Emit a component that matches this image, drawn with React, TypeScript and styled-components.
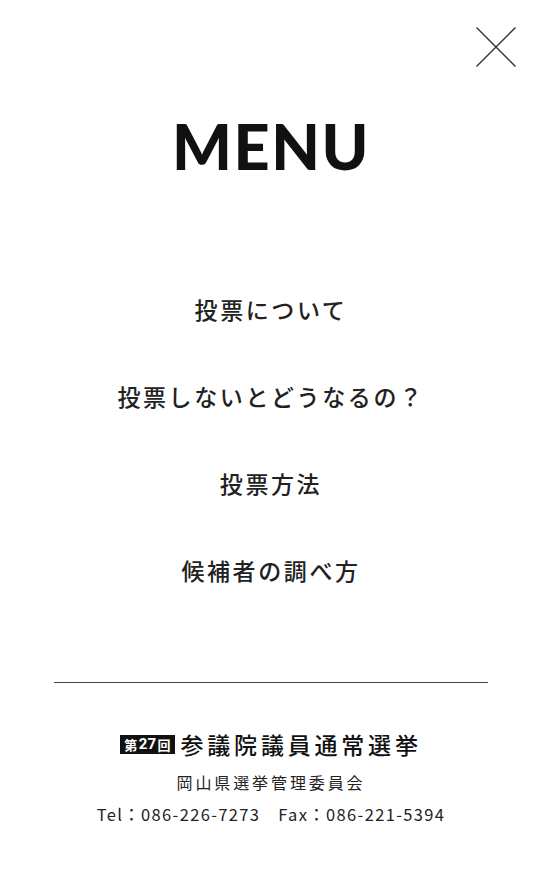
import React from "react";
import styled, { createGlobalStyle } from "styled-components";

const JP = `"Noto Sans CJK JP", "Noto Sans", sans-serif`;

const MENU_ITEMS = ["投票について", "投票しないとどうなるの？", "投票方法", "候補者の調べ方"];

const GlobalStyle = createGlobalStyle`
  html, body {
    margin: 0;
    padding: 0;
    background: #fff;
  }
  body {
    font-family: ${JP};
    color: #222;
  }
`;

const Page = styled.div`
  width: 542px;
  min-height: 878px;
  display: flex;
  flex-direction: column;
  align-items: center;
  background: #fff;
`;

const TopBar = styled.div`
  align-self: stretch;
  display: flex;
  justify-content: flex-end;
  padding: 27px 26px 0 0;
`;

const CloseButton = styled.button`
  width: 40px;
  height: 40px;
  padding: 0;
  border: none;
  background: none;
  cursor: pointer;
  display: block;
`;

const Title = styled.h1`
  margin: 39px 0 0;
  font-family: "Lato", "DejaVu Sans", sans-serif;
  font-weight: 900;
  font-size: 63px;
  line-height: 80px;
  letter-spacing: 1.5px;
  color: #111;
`;

const Nav = styled.ul`
  list-style: none;
  margin: 106px 0 0;
  padding: 0;
  display: flex;
  flex-direction: column;
  align-items: center;
  gap: 53px;
`;

const NavItem = styled.li`
  font-family: ${JP};
  font-weight: 500;
  font-size: 23px;
  line-height: 34px;
  letter-spacing: 2.6px;
  color: #222;
`;

const Divider = styled.hr`
  width: 80%;
  margin: 95px 0 0;
  border: none;
  border-top: 1px solid #444;
`;

const Footer = styled.footer`
  margin-top: 46px;
  display: flex;
  flex-direction: column;
  align-items: center;
`;

const ElectionRow = styled.div`
  display: flex;
  align-items: center;
  gap: 6px;
`;

const Badge = styled.span`
  display: inline-flex;
  align-items: center;
  height: 19px;
  padding: 0 4px;
  background: #111;
  color: #fff;
  font-family: ${JP};
  font-weight: 700;
  font-size: 13px;
  letter-spacing: 0;
`;

const BadgeNum = styled.span`
  font-family: "Roboto", "Liberation Sans", sans-serif;
  font-weight: 700;
  font-size: 15px;
  margin: 0 1.5px;
`;

const ElectionName = styled.span`
  font-family: ${JP};
  font-weight: 500;
  font-size: 23px;
  line-height: 30px;
  letter-spacing: 3.8px;
  color: #111;
`;

const Org = styled.div`
  margin-top: 11px;
  font-family: ${JP};
  font-size: 16px;
  line-height: 24px;
  letter-spacing: 2.9px;
  color: #222;
`;

const Contact = styled.div`
  margin-top: 8px;
  font-family: ${JP};
  font-size: 16.5px;
  line-height: 24px;
  letter-spacing: 1.35px;
  color: #222;
  white-space: pre;
`;

const CloseIcon: React.FC = () => (
  <svg width="40" height="40" viewBox="0 0 40 40" aria-hidden>
    <path d="M0.5 0.5L39.5 39.5M39.5 0.5L0.5 39.5" stroke="#333" strokeWidth="1.4" fill="none" />
  </svg>
);

const App: React.FC = () => (
  <Page>
    <GlobalStyle />
    <TopBar>
      <CloseButton type="button" aria-label="close">
        <CloseIcon />
      </CloseButton>
    </TopBar>
    <Title>MENU</Title>
    <Nav>
      {MENU_ITEMS.map((item) => (
        <NavItem key={item}>{item}</NavItem>
      ))}
    </Nav>
    <Divider />
    <Footer>
      <ElectionRow>
        <Badge>
          第<BadgeNum>27</BadgeNum>回
        </Badge>
        <ElectionName>参議院議員通常選挙</ElectionName>
      </ElectionRow>
      <Org>岡山県選挙管理委員会</Org>
      <Contact>{"Tel：086-226-7273　Fax：086-221-5394"}</Contact>
    </Footer>
  </Page>
);

export default App;
